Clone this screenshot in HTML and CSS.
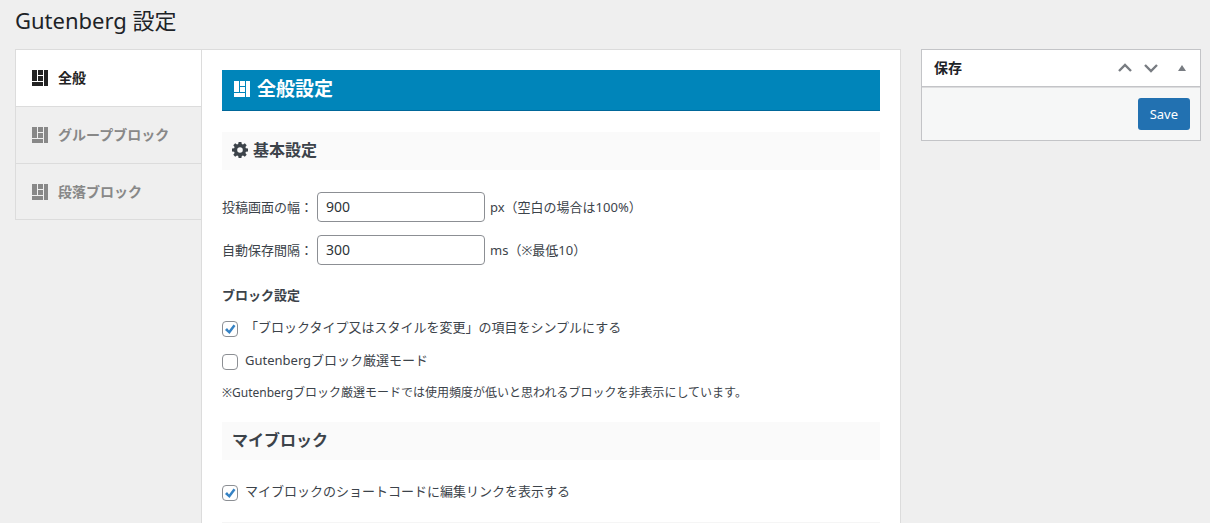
FILE: index.html
```
<!DOCTYPE html>
<html lang="ja">
<head>
    <meta charset="UTF-8">
    <meta name="viewport" content="width=device-width, initial-scale=1.0">
    <title>Gutenberg 設定</title>
    <link rel="stylesheet" href="styles.css">
</head>
<body>
    <!-- Shared icons -->
    <svg class="sprite" aria-hidden="true">
        <symbol id="icon-layout" viewBox="0 0 16 16">
            <path d="M0 0h5v11H0zM6 0h5v5H6zM6 6h5v5H6zM0 12h11v4H0zM12 0h4v16h-4z"/>
        </symbol>
        <symbol id="icon-chevron" viewBox="0 0 14 14">
            <path d="M1 10l6-6 6 6" fill="none" stroke="currentColor" stroke-width="2.400"/>
        </symbol>
    </svg>

    <h1>Gutenberg 設定</h1>
    <div class="layout">
        <nav class="tabs">
            <a href="#general" class="tab active"><svg class="icon"><use href="#icon-layout"/></svg>全般</a>
            <a href="#group" class="tab"><svg class="icon"><use href="#icon-layout"/></svg>グループブロック</a>
            <a href="#paragraph" class="tab"><svg class="icon"><use href="#icon-layout"/></svg>段落ブロック</a>
        </nav>

        <main class="panel" id="general">
            <h2><svg class="icon"><use href="#icon-layout"/></svg>全般設定</h2>

            <h3>
                <svg class="icon gear" viewBox="0 0 16 16"><path fill-rule="evenodd" d="M6.6 0h2.8l.4 2.1 1.2.5L12.8 1.300l1.900 1.900-1.300 1.800.5 1.200 2.100.4v2.800l-2.100.4-.5 1.200 1.300 1.800-1.900 1.900-1.800-1.300-1.200.5-.4 2.100H6.600l-.4-2.100-1.200-.5-1.800 1.300-1.900-1.900 1.300-1.800-.5-1.200L0 9.400V6.600l2.100-.4.5-1.200-1.300-1.800 1.900-1.900L5 2.600l1.200-.5zM8 5.200a2.800 2.800 0 1 0 0 5.600 2.800 2.800 0 0 0 0-5.600z"/></svg>基本設定
            </h3>
            <div class="field">
                <label for="width">投稿画面の幅：</label>
                <input type="text" id="width" value="900">
                <span>px（空白の場合は100%）</span>
            </div>
            <div class="field">
                <label for="autosave">自動保存間隔：</label>
                <input type="text" id="autosave" value="300">
                <span>ms（※最低10）</span>
            </div>

            <h4>ブロック設定</h4>
            <div class="check">
                <input type="checkbox" id="simple" checked>
                <label for="simple">「ブロックタイプ又はスタイルを変更」の項目をシンプルにする</label>
            </div>
            <div class="check">
                <input type="checkbox" id="strict">
                <label for="strict">Gutenbergブロック厳選モード</label>
            </div>
            <p class="note">※Gutenbergブロック厳選モードでは使用頻度が低いと思われるブロックを非表示にしています。</p>

            <h3>マイブロック</h3>
            <div class="check">
                <input type="checkbox" id="shortcode" checked>
                <label for="shortcode">マイブロックのショートコードに編集リンクを表示する</label>
            </div>
            <hr>
        </main>

        <aside class="postbox">
            <div class="postbox-header">
                <h2>保存</h2>
                <button type="button" class="handle" aria-label="上に移動"><svg><use href="#icon-chevron"/></svg></button>
                <button type="button" class="handle down" aria-label="下に移動"><svg><use href="#icon-chevron"/></svg></button>
                <button type="button" class="handle toggle" aria-label="パネルを閉じる"><svg viewBox="0 0 8 6"><path d="M4 0l4 6H0z"/></svg></button>
            </div>
            <div class="postbox-body">
                <button type="submit" class="save">Save</button>
            </div>
        </aside>
    </div>
</body>
</html>
```

FILE: styles.css
```
* {
    box-sizing: border-box;
}

body {
    margin: 0;
    padding: 0 9px 0 15px;
    background-color: #efefef;
    color: #3c434a;
    font-family: "Noto Sans", "Noto Sans CJK JP", sans-serif;
    font-size: 13px;
    line-height: 20px;
}

h1, h2, h3, h4, p {
    margin: 0;
}

h1 {
    padding: 5px 0 14px;
    color: #1d2327;
    font-size: 22px;
    font-weight: 400;
    line-height: 30px;
}

.sprite {
    display: none;
}

.icon {
    width: 16px;
    height: 16px;
    flex: none;
    fill: currentColor;
}

.layout {
    display: flex;
    align-items: flex-start;
}

/* Tabs */
.tabs {
    width: 186px;
    flex: none;
    border: 1px solid #dcdcdc;
    border-right: none;
}

.tab {
    display: flex;
    align-items: center;
    gap: 10px;
    height: 56px;
    padding: 0 16px;
    color: #888;
    font-size: 14px;
    font-weight: 700;
    text-decoration: none;
}

.tab + .tab {
    border-top: 1px solid #dcdcdc;
    height: 57px;
}

.tab:last-child {
    height: 56px;
}

.tab.active {
    background-color: #fff;
    color: #222;
}

/* Main panel */
.panel {
    flex: 1;
    padding: 20px 20px 0;
    background-color: #fff;
    border: 1px solid #dcdcdc;
    border-bottom: none;
}

.panel h2 {
    display: flex;
    align-items: center;
    gap: 7px;
    height: 41px;
    padding: 0 12px 2px;
    background-color: #0085ba;
    border-bottom: 1px solid #006799;
    color: #fff;
    font-size: 19px;
}

.panel h3 {
    display: flex;
    align-items: center;
    gap: 5px;
    height: 38px;
    margin: 21px 0 22px;
    padding: 0 10px 2px;
    background-color: #fafafa;
    font-size: 16px;
}

.panel h4 {
    margin: 20px 0 12px;
    font-size: 13px;
}

.field {
    display: flex;
    align-items: center;
    gap: 5px;
    margin-bottom: 13px;
}

.field label {
    width: 90px;
    white-space: nowrap;
}

.field input {
    width: 168px;
    height: 30px;
    padding: 0 8px 2px;
    border: 1px solid #8c8f94;
    border-radius: 4px;
    color: #2c3338;
    font-family: inherit;
    font-size: 14px;
}

.check {
    display: flex;
    align-items: center;
    gap: 7px;
    margin-bottom: 13px;
}

.check input {
    appearance: none;
    width: 16px;
    height: 16px;
    margin: 3px 0 0;
    border: 1px solid #8c8f94;
    border-radius: 4px;
    background: #fff center / 14px 14px no-repeat;
}

.check input:checked {
    background-image: url("data:image/svg+xml,%3Csvg xmlns='http://www.w3.org/2000/svg' viewBox='0 0 14 14'%3E%3Cpath d='M2 8l2-2 2 2.500L10.500 2.500 12.500 4 6.500 12z' fill='%233582c4'/%3E%3C/svg%3E");
}

.note {
    margin-bottom: 19px;
    font-size: 12px;
}

.note + h3 {
    margin-top: 0;
    margin-bottom: 21px;
}

.panel hr {
    height: 1px;
    margin: 21px 0 0;
    border: none;
    background-color: #f5f5f5;
}

/* Save box */
.postbox {
    width: 280px;
    flex: none;
    margin-left: 20px;
    border: 1px solid #c3c4c7;
}

.postbox-header {
    display: flex;
    align-items: center;
    height: 37px;
    padding-left: 12px;
    padding-right: 6px;
    background-color: #fff;
    border-bottom: 1px solid #c3c4c7;
}

.postbox-header h2 {
    flex: 1;
    color: #1d2327;
    font-size: 14px;
}

.handle {
    display: flex;
    align-items: center;
    justify-content: center;
    width: 26px;
    height: 36px;
    padding: 0;
    border: none;
    background: none;
    color: #787c82;
}

.handle svg {
    width: 14px;
    height: 14px;
}

.handle.down svg {
    transform: rotate(180deg);
}

.handle.toggle {
    width: 24px;
    margin-left: 6px;
}

.handle.toggle svg {
    width: 8px;
    height: 6px;
    fill: currentColor;
}

.postbox-body {
    display: flex;
    justify-content: flex-end;
    padding: 10px;
    background-color: #f6f7f7;
    border-top: 1px solid #dcdcde;
}

.save {
    height: 32px;
    padding: 0 12px;
    background-color: #2271b1;
    border: none;
    border-radius: 3px;
    color: #fff;
    font-family: inherit;
    font-size: 13px;
}
```
